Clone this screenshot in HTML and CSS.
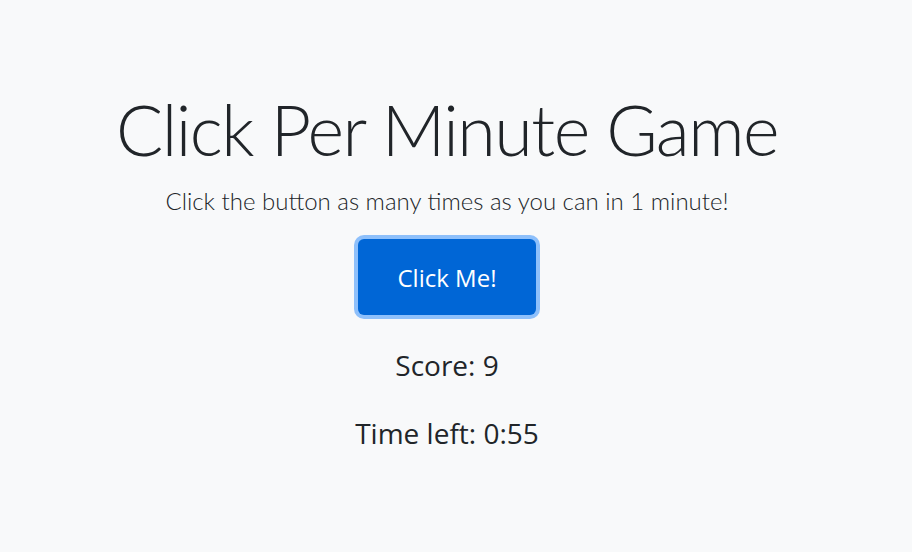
FILE: index.html
```html
<!DOCTYPE html>
<html lang="en">
<head>
<meta charset="utf-8">
<title>Click Per Minute Game</title>
<link rel="stylesheet" href="styles.css">
</head>
<body>
<main class="game">
  <h1 class="title">Click Per Minute Game</h1>
  <p class="lead">Click the button as many times as you can in 1 minute!</p>
  <button class="btn-click" type="button">Click Me!</button>
  <h3 class="stat">Score: 9</h3>
  <h3 class="stat">Time left: 0:55</h3>
</main>
</body>
</html>
```

FILE: styles.css
```css
html, body {
  margin: 0;
  padding: 0;
  background: #f8f9fa;
  color: #212529;
  font-family: "Open Sans", "Noto Sans", sans-serif;
}

.game {
  display: flex;
  flex-direction: column;
  align-items: center;
  padding: 87px 18px 0 0;
}

.title {
  margin: 0;
  font-family: "Lato", "Open Sans", sans-serif;
  font-size: 70px;
  font-weight: 300;
  letter-spacing: -1.5px;
  line-height: 1.2;
}

.lead {
  margin: 12px 0 20px;
  font-family: "Lato", "Open Sans", sans-serif;
  font-size: 24px;
  font-weight: 300;
  line-height: 1.5;
}

.btn-click {
  width: 178px;
  height: 76px;
  border: none;
  border-radius: 6px;
  background: #0066d6;
  color: #fff;
  font-family: inherit;
  font-size: 24px;
  box-shadow: 0 0 0 4px #8ec0fb;
}

.stat {
  margin: 34px 0 0;
  font-size: 28px;
  font-weight: 400;
  line-height: 1.2;
}

.stat + .stat {
  margin-top: 34px;
}
```
